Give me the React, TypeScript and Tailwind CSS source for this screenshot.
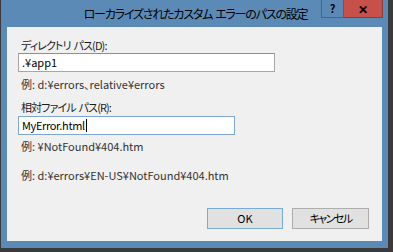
import React from "react";

const font: React.CSSProperties = {
  fontFamily: '"Noto Sans CJK JP", "Noto Sans", sans-serif',
  fontFeatureSettings: '"palt" 1',
};

export default function App() {
  return (
    <div
      className="w-[393px] h-[252px] bg-[#3a3a3a] pl-[1px] pr-[5px] pb-[4px] overflow-hidden"
      style={font}
    >
      <div className="h-full bg-[#5b8ab7] flex flex-col pb-[7px]">
        <div className="relative h-[27px] shrink-0 flex items-start justify-center">
          <div className="mt-[5px] text-[12px] leading-[18px] text-black whitespace-pre tracking-[-1.2px] pl-[2px]">
            ローカライズされたカスタム<span className="ml-[3px]">エラーのパスの設定</span>
          </div>
          <div className="absolute top-0 right-[5px] flex">
            <div className="w-[23px] h-[18px] bg-[#5b8ab7] border-x border-b border-[#3e6790] flex items-center justify-center text-[11px] font-bold text-black leading-none">
              ?
            </div>
            <div className="w-[39px] h-[18px] bg-[#c7504b] border-r border-b border-[#8e3a36] flex items-center justify-center text-[12px] font-bold text-black leading-none">
              ✕
            </div>
          </div>
        </div>
        <div className="flex-1 mx-[6px] bg-[#f0f0f0] flex flex-col pl-[11px] pr-[13px] pt-[10px] pb-[12px] text-[11px] text-[#1a1a1a]">
          <div className="h-[16px] leading-[16px] ml-[3px] whitespace-pre tracking-[-0.9px]">
            ディレクトリ<span className="ml-[3px]">パス(D):</span>
          </div>
          <div className="w-[257px] h-[19px] bg-white border border-[#a6a6a6] border-t-[#8f8f8f] pl-[3px] leading-[17px] text-black">
            .¥app1
          </div>
          <div className="mt-[4px] h-[16px] leading-[16px] ml-[3px] text-[#333]">例: d:¥errors、relative¥errors</div>
          <div className="mt-[7px] h-[16px] leading-[16px] ml-[3px] whitespace-pre tracking-[-0.9px]">
            相対ファイル<span className="ml-[3px]">パス(R):</span>
          </div>
          <div className="mt-[1px] w-[217px] h-[19px] bg-white border border-[#7ea6d1] pl-[3px] leading-[17px] text-black flex items-center">
            <span className="tracking-[-0.35px]">MyError.html</span>
            <span className="inline-block w-[1px] h-[13px] bg-black ml-[1px]" />
          </div>
          <div className="mt-[3px] h-[16px] leading-[16px] ml-[3px] text-[#333]">例: ¥NotFound¥404.htm</div>
          <div className="mt-[13px] h-[16px] leading-[16px] ml-[3px] text-[#333]">例: d:¥errors¥EN-US¥NotFound¥404.htm</div>
          <div className="flex-1" />
          <div className="flex justify-end gap-[9px]">
            <div className="w-[76px] h-[21px] bg-[#e1e1e1] border border-[#7aaad8] flex items-center justify-center text-black">
              OK
            </div>
            <div className="w-[77px] h-[21px] bg-[#e1e1e1] border border-[#adadad] flex items-center justify-center text-black tracking-[-1.6px]">
              キャンセル
            </div>
          </div>
        </div>
      </div>
    </div>
  );
}
